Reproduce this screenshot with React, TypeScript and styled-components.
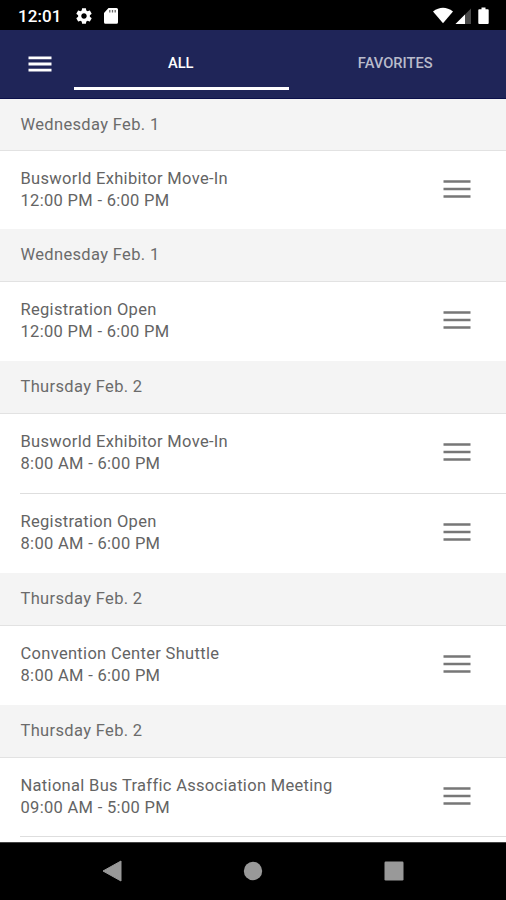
import React from "react";
import styled, { createGlobalStyle } from "styled-components";

const GlobalStyle = createGlobalStyle`
  * { box-sizing: border-box; }
  html, body { margin: 0; padding: 0; background: #fff; }
  body { font-family: Roboto, "Liberation Sans", sans-serif; }
`;

const Screen = styled.div`
  width: 506px;
  height: 900px;
  display: flex;
  flex-direction: column;
  overflow: hidden;
  background: #fff;
`;

const StatusBar = styled.div`
  flex: none;
  height: 30px;
  padding: 1px 15px 0 18px;
  display: flex;
  align-items: center;
  background: #000;
  color: #fff;
`;

const Clock = styled.span`
  width: 58px;
  font-size: 17px;
  font-weight: 500;
  letter-spacing: 0.1px;
  line-height: 20px;
`;

const StatusIcons = styled.div<{ $end?: boolean }>`
  display: flex;
  align-items: center;
  height: 20px;
  margin-left: ${(p) => (p.$end ? "auto" : "0")};
  svg { display: block; }
`;

const Header = styled.header`
  flex: none;
  height: 69px;
  display: flex;
  background: #1f2558;
  border-bottom: 1px solid #0b104a;
`;

const MenuButton = styled.button`
  width: 74px;
  padding: 0 0 0 28px;
  border: 0;
  background: none;
  svg { display: block; }
`;

const Tab = styled.button<{ $active?: boolean }>`
  width: 214.5px;
  padding: 8px 1px 0 0;
  border: 0;
  border-bottom: 3px solid ${(p) => (p.$active ? "#fff" : "transparent")};
  margin-bottom: 8px;
  background: none;
  font-family: inherit;
  font-size: 14.7px;
  font-weight: 500;
  line-height: 18px;
  color: ${(p) => (p.$active ? "#fff" : "#b9bbcb")};
`;

const List = styled.main`
  flex: 1;
  min-height: 0;
  overflow: hidden;
`;

const SectionTitle = styled.h2<{ $height: number }>`
  height: ${(p) => p.$height}px;
  margin: 0;
  padding: 15px 20.5px 0;
  border-bottom: 1px solid #e2e2e2;
  background: #f4f4f4;
  font-size: 16.5px;
  font-weight: 400;
  letter-spacing: 0.34px;
  line-height: 22px;
  color: #6b6b6b;
`;

const Row = styled.div<{ $height: number; $divided?: boolean }>`
  height: ${(p) => p.$height}px;
  margin-left: 20px;
  padding: 16px 35.5px 0 0.5px;
  display: flex;
  justify-content: space-between;
  border-bottom: ${(p) => (p.$divided ? "1px solid #dedede" : "0")};
`;

const Details = styled.div`
  padding-top: 1px;
  font-size: 16.5px;
  letter-spacing: 0.31px;
  line-height: 22px;
  color: #646464;
  white-space: nowrap;
`;

const Handle = styled.svg`
  display: block;
  margin-top: 12px;
`;

const NavBar = styled.nav`
  flex: none;
  height: 58.5px;
  display: flex;
  align-items: center;
  justify-content: space-between;
  padding: 0 102px;
  background: #000;
  border-top: 1px solid #444;
  svg { display: block; }
`;

type Session = { title: string; time: string; height: number; divided?: boolean };
type Section = { day: string; height: number; sessions: Session[] };

const sections: Section[] = [
  {
    day: "Wednesday Feb. 1",
    height: 52,
    sessions: [{ title: "Busworld Exhibitor Move-In", time: "12:00 PM - 6:00 PM", height: 78 }],
  },
  {
    day: "Wednesday Feb. 1",
    height: 53,
    sessions: [{ title: "Registration Open", time: "12:00 PM - 6:00 PM", height: 79 }],
  },
  {
    day: "Thursday Feb. 2",
    height: 53,
    sessions: [
      { title: "Busworld Exhibitor Move-In", time: "8:00 AM - 6:00 PM", height: 80, divided: true },
      { title: "Registration Open", time: "8:00 AM - 6:00 PM", height: 79 },
    ],
  },
  {
    day: "Thursday Feb. 2",
    height: 53,
    sessions: [{ title: "Convention Center Shuttle", time: "8:00 AM - 6:00 PM", height: 79 }],
  },
  {
    day: "Thursday Feb. 2",
    height: 53,
    sessions: [
      { title: "National Bus Traffic Association Meeting", time: "09:00 AM - 5:00 PM", height: 79, divided: true },
    ],
  },
];

export default function App() {
  return (
    <Screen>
      <GlobalStyle />
      <StatusBar>
        <Clock>12:01</Clock>
        <StatusIcons>
          <svg width="16" height="16" viewBox="1.8 1.8 20.4 20.4" fill="#fff">
            <path d="M19.43 12.98c.04-.32.07-.64.07-.98s-.03-.66-.07-.98l2.11-1.65c.19-.15.24-.42.12-.64l-2-3.46c-.12-.22-.39-.3-.61-.22l-2.49 1c-.52-.4-1.08-.73-1.69-.98l-.38-2.65C14.46 2.18 14.25 2 14 2h-4c-.25 0-.46.18-.49.42l-.38 2.65c-.61.25-1.17.59-1.69.98l-2.49-1c-.23-.09-.49 0-.61.22l-2 3.46c-.13.22-.07.49.12.64l2.11 1.65c-.04.32-.07.65-.07.98s.03.66.07.98l-2.11 1.65c-.19.15-.24.42-.12.64l2 3.46c.12.22.39.3.61.22l2.49-1c.52.4 1.08.73 1.69.98l.38 2.65c.03.24.24.42.49.42h4c.25 0 .46-.18.49-.42l.38-2.65c.61-.25 1.17-.59 1.69-.98l2.49 1c.23.09.49 0 .61-.22l2-3.46c.12-.22.07-.49-.12-.64l-2.11-1.65zM12 15.5c-1.93 0-3.5-1.57-3.5-3.5s1.57-3.5 3.5-3.5 3.5 1.57 3.5 3.5-1.57 3.5-3.5 3.5z" />
          </svg>
          <svg width="28" height="18" viewBox="0 0 28 18">
            <path d="M16.5 1H24.500a1.500 1.500 0 0 1 1.500 1.500v12.800A1.500 1.500 0 0 1 24.500 16.800H13.500a1.500 1.500 0 0 1-1.500-1.500V6z" fill="#fff" />
            <path d="M17.800 3v2.500M20.500 3v2.500M23.200 3v2.500" stroke="#666" strokeWidth="1.300" />
          </svg>
        </StatusIcons>
        <StatusIcons $end>
          <svg width="58" height="18" viewBox="0 0 58 18">
            <path d="M0 4.500Q10 -3 20 4.500L10 16.300z" fill="#fff" />
            <path d="M38 1.500V17H22.500z" fill="#484848" />
            <path d="M32 7.500V17H22.500z" fill="#fff" />
            <path d="M48.500 .5h4v1.700h2.300q.9 0 .9.900v13q0 .9-.9.900h-8.600q-.9 0-.9-.9v-13q0-.9.900-.9h2.300z" fill="#fff" />
          </svg>
        </StatusIcons>
      </StatusBar>
      <Header>
        <MenuButton aria-label="Menu">
          <svg width="24" height="16" viewBox="0 0 24 16">
            <path d="M.5 1.800h23M.5 8h23M.5 14.200h23" stroke="#fff" strokeWidth="2.800" />
          </svg>
        </MenuButton>
        <Tab $active>ALL</Tab>
        <Tab>FAVORITES</Tab>
      </Header>
      <List>
        {sections.map((section, i) => (
          <section key={i}>
            <SectionTitle $height={section.height}>{section.day}</SectionTitle>
            {section.sessions.map((s, j) => (
              <Row key={j} $height={s.height} $divided={s.divided}>
                <Details>
                  <div>{s.title}</div>
                  <div>{s.time}</div>
                </Details>
                <Handle width="28" height="20" viewBox="0 0 28 20">
                  <path d="M.5 2.500h27M.5 10h27M.5 17.500h27" stroke="#777" strokeWidth="2.400" />
                </Handle>
              </Row>
            ))}
          </section>
        ))}
      </List>
      <NavBar>
        <svg width="20" height="22" viewBox="0 0 20 22">
          <path d="M19 1v20L1 11z" fill="#999" stroke="#999" strokeWidth="1" strokeLinejoin="round" />
        </svg>
        <svg width="20" height="20" viewBox="0 0 20 20">
          <circle cx="10" cy="10" r="9.200" fill="#999" />
        </svg>
        <svg width="20" height="20" viewBox="0 0 20 20">
          <rect x=".5" y=".5" width="19" height="19" rx="1.200" fill="#999" />
        </svg>
      </NavBar>
    </Screen>
  );
}
